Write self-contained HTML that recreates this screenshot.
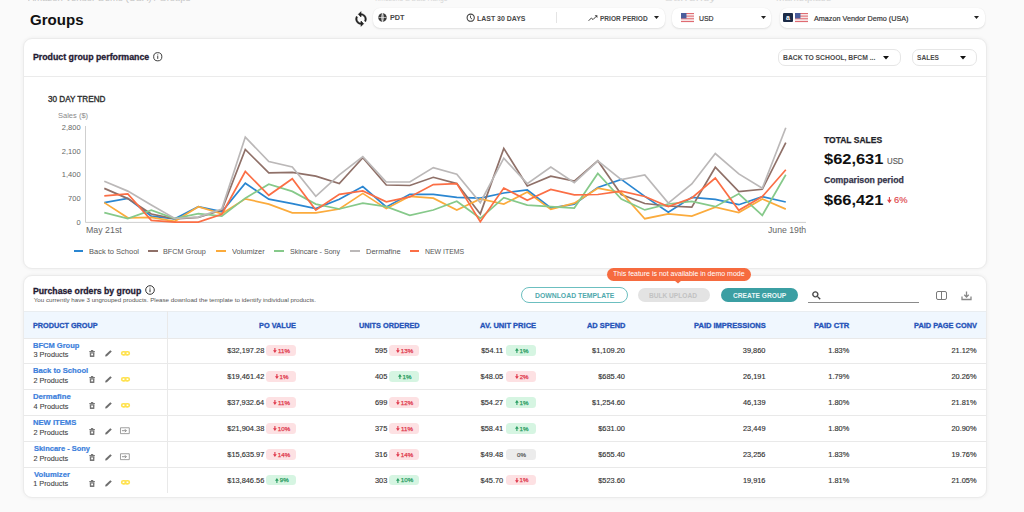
<!DOCTYPE html>
<html><head><meta charset="utf-8"><style>
html,body{margin:0;padding:0;}
body{width:1024px;height:512px;overflow:hidden;position:relative;background:#fafafa;font-family:"Liberation Sans", sans-serif;}
.t{position:absolute;white-space:nowrap;font-family:"Liberation Sans", sans-serif;}
svg{overflow:visible;}
</style></head><body>
<div class="t" style="left:30.38px;top:12.10px;font-size:15px;line-height:15px;font-weight:700;color:#111;transform:scaleX(1.0053);transform-origin:0 0;">Groups</div>
<div class="t" style="left:27.98px;top:-5.17px;font-size:8px;line-height:8px;font-weight:400;color:#c4c4c4;transform:scaleX(1.1817);transform-origin:0 0;">Amazon Vendor Demo (USA) / Groups</div>
<div class="t" style="left:373.55px;top:-4.53px;font-size:7px;line-height:7px;font-weight:400;color:#d6d6d6;transform:scaleX(0.9614);transform-origin:0 0;">Timezone &amp; Date Range</div>
<div class="t" style="left:664.36px;top:-4.53px;font-size:7px;line-height:7px;font-weight:400;color:#d6d6d6;transform:scaleX(1.8192);transform-origin:0 0;">Currency</div>
<div class="t" style="left:775.87px;top:-4.53px;font-size:7px;line-height:7px;font-weight:400;color:#d6d6d6;transform:scaleX(1.4498);transform-origin:0 0;">Marketplace</div>
<svg style="position:absolute;left:353px;top:11px" width="16" height="16" viewBox="0 0 24 24">
<path fill="#222" stroke="#222" stroke-width="0.9" d="M12 4V1L8 5l4 4V6c3.31 0 6 2.69 6 6 0 1.01-.25 1.97-.7 2.8l1.46 1.46C19.540 15.03 20 13.57 20 12c0-4.42-3.58-8-8-8zm0 14c-3.31 0-6-2.69-6-6 0-1.01.25-1.970.7-2.8L5.24 7.74C4.46 8.97 4 10.43 4 12c0 4.42 3.58 8 8 8v3l4-4-4-4v3z"/></svg>
<div style="position:absolute;left:373px;top:7.5px;width:292px;height:20.5px;background:#fff;border-radius:7px;box-shadow:0 1px 2px rgba(0,0,0,0.10),0 0 1px rgba(0,0,0,0.08);"></div>
<div style="position:absolute;left:672px;top:7.5px;width:99px;height:20.5px;background:#fff;border-radius:7px;box-shadow:0 1px 2px rgba(0,0,0,0.10),0 0 1px rgba(0,0,0,0.08);"></div>
<div style="position:absolute;left:779.5px;top:7.5px;width:205.5px;height:20.5px;background:#fff;border-radius:7px;box-shadow:0 1px 2px rgba(0,0,0,0.10),0 0 1px rgba(0,0,0,0.08);"></div>
<svg style="position:absolute;left:378px;top:12.8px" width="9" height="9" viewBox="0 0 20 20">
<circle cx="10" cy="10" r="9.5" fill="#3a3a3a"/><path fill="none" stroke="#fff" stroke-width="1.3" d="M1 10h18M10 1v18M10 1c-3 3-3 15 0 18M10 1c3 3 3 15 0 18"/></svg>
<div class="t" style="left:389.52px;top:14.40px;font-size:7.8px;line-height:7.8px;font-weight:700;color:#484848;transform:scaleX(0.9329);transform-origin:0 0;">PDT</div>
<svg style="position:absolute;left:465.8px;top:12.8px" width="9.4" height="9.4" viewBox="0 0 24 24">
<circle cx="12" cy="12" r="9.2" fill="none" stroke="#444" stroke-width="2.8"/><path fill="none" stroke="#444" stroke-width="2.4" d="M11.5 6.5V12.5L15.5 15.5"/></svg>
<div class="t" style="left:477.14px;top:14.70px;font-size:7.8px;line-height:7.8px;font-weight:700;color:#484848;transform:scaleX(0.8933);transform-origin:0 0;">LAST 30 DAYS</div>
<div style="position:absolute;left:556px;top:12px;width:0.8px;height:11px;background:#e4e4e4;"></div>
<svg style="position:absolute;left:587.5px;top:13.5px" width="10" height="8" viewBox="0 0 24 20">
<path fill="none" stroke="#333" stroke-width="2.4" d="M1 17 L8 10 L12 14 L20 6"/><path fill="#333" d="M16 3h7v7z"/></svg>
<div class="t" style="left:599.57px;top:14.70px;font-size:7.8px;line-height:7.8px;font-weight:700;color:#484848;transform:scaleX(0.8402);transform-origin:0 0;">PRIOR PERIOD</div>
<svg style="position:absolute;left:653.80px;top:16.20px" width="5" height="3" viewBox="0 0 5 3"><path fill="#222" d="M0 0H5L2.5 3z"/></svg>
<svg style="position:absolute;left:760.50px;top:16.20px" width="5" height="3" viewBox="0 0 5 3"><path fill="#222" d="M0 0H5L2.5 3z"/></svg>
<svg style="position:absolute;left:973.80px;top:16.20px" width="5" height="3" viewBox="0 0 5 3"><path fill="#222" d="M0 0H5L2.5 3z"/></svg>
<svg style="position:absolute;left:680.5px;top:13px" width="13" height="9.5" viewBox="0 0 13 9.5"><rect width="13" height="9.5" fill="#f6e4e5"/><rect y="0.000" width="13" height="0.746" fill="#d8434a"/><rect y="2.714" width="13" height="0.746" fill="#d8434a"/><rect y="5.429" width="13" height="0.746" fill="#d8434a"/><rect y="8.143" width="13" height="0.746" fill="#d8434a"/><rect width="5.46" height="5.43" fill="#4a5d9c"/></svg>
<div style="position:absolute;left:783.3px;top:13.3px;width:9.5px;height:9px;background:#1c2b47;border-radius:1px;"></div>
<div class="t" style="left:785.93px;top:14.07px;font-size:7px;line-height:7px;font-weight:700;color:#fff;">a</div>
<svg style="position:absolute;left:795.4px;top:13px" width="13" height="9.5" viewBox="0 0 13 9.5"><rect width="13" height="9.5" fill="#f6e4e5"/><rect y="0.000" width="13" height="0.746" fill="#d8434a"/><rect y="2.714" width="13" height="0.746" fill="#d8434a"/><rect y="5.429" width="13" height="0.746" fill="#d8434a"/><rect y="8.143" width="13" height="0.746" fill="#d8434a"/><rect width="5.46" height="5.43" fill="#4a5d9c"/></svg>
<div class="t" style="left:814.39px;top:14.73px;font-size:8.0px;line-height:8.0px;font-weight:400;color:#333;transform:scaleX(0.9041);transform-origin:0 0;-webkit-text-stroke:0.2px #333;">Amazon Vendor Demo (USA)</div>
<div class="t" style="left:699.17px;top:14.73px;font-size:8.0px;line-height:8.0px;font-weight:400;color:#333;transform:scaleX(0.8619);transform-origin:0 0;-webkit-text-stroke:0.2px #333;">USD</div>
<div style="position:absolute;left:23px;top:38px;width:963.5px;height:230.5px;background:#fff;border:1px solid #ebebeb;border-radius:9px;box-sizing:border-box;box-shadow:0 0 3px 1px rgba(0,0,0,0.035);"></div>
<div class="t" style="left:32.92px;top:52.75px;font-size:8.8px;line-height:8.8px;font-weight:700;color:#1f1a33;-webkit-text-stroke:0.3px #1f1a33;">Product group performance</div>
<svg style="position:absolute;left:153.25px;top:52.45px" width="9.5" height="9.5" viewBox="0 0 20 20"><circle cx="10" cy="10" r="8.6" fill="none" stroke="#333" stroke-width="2"/><rect x="9" y="8.5" width="2" height="6" fill="#333"/><rect x="9" y="5.2" width="2" height="2" fill="#333"/></svg>
<div style="position:absolute;left:24px;top:75.8px;width:961.5px;height:1.1px;background:#ebebeb;"></div>
<div style="position:absolute;left:777.5px;top:48.6px;width:123.5px;height:17.8px;background:#fff;border:1px solid #e6e6e6;border-radius:7px;box-sizing:border-box;"></div>
<div style="position:absolute;left:911.5px;top:48.6px;width:65.5px;height:17.8px;background:#fff;border:1px solid #e6e6e6;border-radius:7px;box-sizing:border-box;"></div>
<div class="t" style="left:782.85px;top:54.22px;font-size:7.3px;line-height:7.3px;font-weight:700;color:#4a4a4a;transform:scaleX(0.9276);transform-origin:0 0;">BACK TO SCHOOL, BFCM ...</div>
<svg style="position:absolute;left:883.00px;top:55.65px" width="6" height="3.5" viewBox="0 0 6 3.5"><path fill="#111" d="M0 0H6L3.0 3.5z"/></svg>
<div class="t" style="left:917.12px;top:54.22px;font-size:7.3px;line-height:7.3px;font-weight:700;color:#4a4a4a;transform:scaleX(0.9015);transform-origin:0 0;">SALES</div>
<svg style="position:absolute;left:959.50px;top:55.65px" width="6" height="3.5" viewBox="0 0 6 3.5"><path fill="#111" d="M0 0H6L3.0 3.5z"/></svg>
<div class="t" style="left:47.99px;top:94.87px;font-size:8.3px;line-height:8.3px;font-weight:400;color:#2e2e2e;transform:scaleX(0.9797);transform-origin:0 0;-webkit-text-stroke:0.35px #2e2e2e;">30 DAY TREND</div>
<div class="t" style="left:58.26px;top:112.21px;font-size:7.2px;line-height:7.2px;font-weight:400;color:#8a8a8a;transform:scaleX(1.0451);transform-origin:0 0;">Sales ($)</div>
<div class="t" style="left:61.82px;top:124.05px;font-size:7.5px;line-height:7.5px;font-weight:400;color:#666;">2,800</div>
<div class="t" style="left:61.82px;top:147.55px;font-size:7.5px;line-height:7.5px;font-weight:400;color:#666;">2,100</div>
<div class="t" style="left:61.82px;top:171.05px;font-size:7.5px;line-height:7.5px;font-weight:400;color:#666;">1,400</div>
<div class="t" style="left:68.08px;top:194.95px;font-size:7.5px;line-height:7.5px;font-weight:400;color:#666;">700</div>
<div class="t" style="left:76.41px;top:218.65px;font-size:7.5px;line-height:7.5px;font-weight:400;color:#666;">0</div>
<div class="t" style="left:86.18px;top:225.62px;font-size:8.6px;line-height:8.6px;font-weight:400;color:#666;transform:scaleX(1.0256);transform-origin:0 0;">May 21st</div>
<div class="t" style="left:767.87px;top:225.62px;font-size:8.6px;line-height:8.6px;font-weight:400;color:#666;transform:scaleX(1.0110);transform-origin:0 0;">June 19th</div>
<svg style="position:absolute;left:0;top:0" width="1024" height="512" viewBox="0 0 1024 512"><path d="M85.5 126V222.4H806" fill="none" stroke="#cfcfcf" stroke-width="1"/><polyline points="104.3,202.6 127.8,198.3 151.3,216.2 174.8,218.8 198.3,206.7 221.8,211.7 245.3,183.2 268.8,199.2 292.3,203.6 315.8,208.6 339.3,199.2 362.8,186.5 386.3,207.0 409.8,194.3 433.3,194.3 456.8,197.3 480.3,198.2 503.8,193.0 527.3,190.0 550.8,208.0 574.3,204.1 597.8,187.4 621.3,179.4 644.8,196.4 668.3,212.2 691.8,197.3 715.3,199.4 738.8,204.7 762.3,196.6 785.8,202.0" fill="none" stroke="#2a86d1" stroke-width="1.7" stroke-linejoin="miter"/><polyline points="104.3,188.4 127.8,198.6 151.3,214.0 174.8,218.8 198.3,217.3 221.8,210.0 245.3,149.4 268.8,172.9 292.3,172.3 315.8,176.2 339.3,183.6 362.8,157.8 386.3,185.0 409.8,185.5 433.3,177.3 456.8,183.6 480.3,213.9 503.8,148.4 527.3,186.0 550.8,176.2 574.3,181.2 597.8,160.8 621.3,194.5 644.8,203.5 668.3,206.0 691.8,207.2 715.3,167.2 738.8,191.6 762.3,189.3 785.8,142.7" fill="none" stroke="#8f7068" stroke-width="1.7" stroke-linejoin="miter"/><polyline points="104.3,202.6 127.8,217.8 151.3,217.4 174.8,221.3 198.3,206.7 221.8,213.8 245.3,198.8 268.8,204.1 292.3,212.9 315.8,212.9 339.3,209.0 362.8,193.4 386.3,208.6 409.8,196.3 433.3,198.2 456.8,210.0 480.3,199.0 503.8,204.1 527.3,192.0 550.8,209.4 574.3,203.1 597.8,188.2 621.3,192.6 644.8,218.7 668.3,213.9 691.8,216.1 715.3,207.2 738.8,212.5 762.3,198.9 785.8,209.1" fill="none" stroke="#fbab3c" stroke-width="1.7" stroke-linejoin="miter"/><polyline points="104.3,212.6 127.8,218.6 151.3,210.2 174.8,218.5 198.3,213.6 221.8,216.2 245.3,198.2 268.8,184.2 292.3,191.4 315.8,204.1 339.3,209.0 362.8,203.1 386.3,206.6 409.8,215.4 433.3,210.0 456.8,201.2 480.3,218.3 503.8,197.7 527.3,205.1 550.8,206.6 574.3,208.0 597.8,173.4 621.3,199.0 644.8,209.9 668.3,204.0 691.8,201.4 715.3,206.7 738.8,193.8 762.3,215.3 785.8,174.7" fill="none" stroke="#86c98a" stroke-width="1.7" stroke-linejoin="miter"/><polyline points="104.3,181.2 127.8,191.1 151.3,204.9 174.8,218.5 198.3,217.1 221.8,209.0 245.3,137.1 268.8,161.5 292.3,167.0 315.8,196.3 339.3,174.8 362.8,156.6 386.3,182.0 409.8,182.0 433.3,167.6 456.8,174.2 480.3,202.7 503.8,158.2 527.3,183.6 550.8,167.0 574.3,182.6 597.8,160.8 621.3,179.6 644.8,174.9 668.3,203.1 691.8,184.0 715.3,153.5 738.8,173.9 762.3,188.2 785.8,127.8" fill="none" stroke="#bbb8b8" stroke-width="1.7" stroke-linejoin="miter"/><polyline points="104.3,195.9 127.8,194.0 151.3,220.4 174.8,222.1 198.3,222.1 221.8,214.2 245.3,171.5 268.8,195.3 292.3,178.7 315.8,210.0 339.3,194.3 362.8,191.0 386.3,201.8 409.8,196.9 433.3,184.6 456.8,183.6 480.3,221.7 503.8,188.1 527.3,200.2 550.8,189.5 574.3,194.9 597.8,194.5 621.3,191.2 644.8,196.5 668.3,206.5 691.8,198.0 715.3,178.1 738.8,210.3 762.3,196.6 785.8,169.8" fill="none" stroke="#fb6e45" stroke-width="1.7" stroke-linejoin="miter"/></svg>
<div style="position:absolute;left:73.8px;top:250.4px;width:9.6px;height:1.9px;background:#2a86d1;"></div>
<div class="t" style="left:88.79px;top:247.57px;font-size:7.6px;line-height:7.6px;font-weight:400;color:#555;transform:scaleX(0.9865);transform-origin:0 0;">Back to School</div>
<div style="position:absolute;left:148px;top:250.4px;width:9.6px;height:1.9px;background:#8f7068;"></div>
<div class="t" style="left:163.10px;top:247.57px;font-size:7.6px;line-height:7.6px;font-weight:400;color:#555;transform:scaleX(0.9560);transform-origin:0 0;">BFCM Group</div>
<div style="position:absolute;left:216.4px;top:250.4px;width:9.6px;height:1.9px;background:#fbab3c;"></div>
<div class="t" style="left:231.57px;top:247.57px;font-size:7.6px;line-height:7.6px;font-weight:400;color:#555;transform:scaleX(0.9813);transform-origin:0 0;">Volumizer</div>
<div style="position:absolute;left:274.2px;top:250.4px;width:9.6px;height:1.9px;background:#86c98a;"></div>
<div class="t" style="left:290.08px;top:247.57px;font-size:7.6px;line-height:7.6px;font-weight:400;color:#555;transform:scaleX(0.9345);transform-origin:0 0;">Skincare - Sony</div>
<div style="position:absolute;left:350.4px;top:250.4px;width:9.6px;height:1.9px;background:#bbb8b8;"></div>
<div class="t" style="left:365.98px;top:247.57px;font-size:7.6px;line-height:7.6px;font-weight:400;color:#555;transform:scaleX(0.9912);transform-origin:0 0;">Dermafine</div>
<div style="position:absolute;left:409.6px;top:250.4px;width:9.6px;height:1.9px;background:#fb6e45;"></div>
<div class="t" style="left:425.23px;top:247.57px;font-size:7.6px;line-height:7.6px;font-weight:400;color:#555;transform:scaleX(0.9120);transform-origin:0 0;">NEW ITEMS</div>
<div class="t" style="left:824.01px;top:135.87px;font-size:8.3px;line-height:8.3px;font-weight:700;color:#1f1f2a;transform:scaleX(1.0247);transform-origin:0 0;-webkit-text-stroke:0.25px #1f1f2a;">TOTAL SALES</div>
<div class="t" style="left:823.79px;top:151.00px;font-size:15.0px;line-height:15.0px;font-weight:700;color:#111;transform:scaleX(1.0946);transform-origin:0 0;">$62,631</div>
<div class="t" style="left:887.00px;top:157.09px;font-size:8.4px;line-height:8.4px;font-weight:400;color:#5a5a5a;transform:scaleX(0.9346);transform-origin:0 0;-webkit-text-stroke:0.15px #5a5a5a;">USD</div>
<div class="t" style="left:823.64px;top:175.92px;font-size:8.6px;line-height:8.6px;font-weight:700;color:#34344a;transform:scaleX(1.0125);transform-origin:0 0;-webkit-text-stroke:0.25px #34344a;">Comparison period</div>
<div class="t" style="left:823.79px;top:191.90px;font-size:15.0px;line-height:15.0px;font-weight:700;color:#111;transform:scaleX(1.0946);transform-origin:0 0;">$66,421</div>
<svg style="position:absolute;left:886.80px;top:197.20px" width="4.8" height="6.2" viewBox="0 0 4.8 6.2"><path fill="#e0474c" d="M1.85 0H2.95V2.79H4.80L2.40 6.20L0 2.79H1.85z"/></svg>
<div class="t" style="left:893.53px;top:196.12px;font-size:8.6px;line-height:8.6px;font-weight:400;color:#e0474c;transform:scaleX(1.0858);transform-origin:0 0;-webkit-text-stroke:0.15px #e0474c;">6%</div>
<div style="position:absolute;left:23px;top:275.0px;width:963.5px;height:222.5px;background:#fff;border:1px solid #ebebeb;border-radius:9px;box-sizing:border-box;box-shadow:0 0 3px 1px rgba(0,0,0,0.035);"></div>
<div class="t" style="left:33.33px;top:286.92px;font-size:8.6px;line-height:8.6px;font-weight:700;color:#1f1a33;transform:scaleX(1.0119);transform-origin:0 0;-webkit-text-stroke:0.3px #1f1a33;">Purchase orders by group</div>
<svg style="position:absolute;left:144.60px;top:285.30px" width="10" height="10" viewBox="0 0 20 20"><circle cx="10" cy="10" r="8.6" fill="none" stroke="#333" stroke-width="2"/><rect x="9" y="8.5" width="2" height="6" fill="#333"/><rect x="9" y="5.2" width="2" height="2" fill="#333"/></svg>
<div class="t" style="left:33.76px;top:297.15px;font-size:6.2px;line-height:6.2px;font-weight:400;color:#555;">You currently have 3 ungrouped products. Please download the template to identify individual products.</div>
<div style="position:absolute;left:521px;top:287.2px;width:107px;height:15.8px;border:1.3px solid #6cbfc0;border-radius:9px;box-sizing:border-box;background:#fff;"></div>
<div class="t" style="left:534.85px;top:292.84px;font-size:6.8px;line-height:6.8px;font-weight:700;color:#4fa9ad;transform:scaleX(1.0076);transform-origin:0 0;">DOWNLOAD TEMPLATE</div>
<div style="position:absolute;left:638.3px;top:287.8px;width:72px;height:14px;background:#e3e3e3;border-radius:8px;"></div>
<div class="t" style="left:649.27px;top:292.74px;font-size:6.8px;line-height:6.8px;font-weight:700;color:#c2c2c2;transform:scaleX(0.9681);transform-origin:0 0;">BULK UPLOAD</div>
<div style="position:absolute;left:720.6px;top:288.3px;width:77.2px;height:13.6px;background:#3b9fa3;border-radius:8px;"></div>
<div class="t" style="left:732.83px;top:292.74px;font-size:6.8px;line-height:6.8px;font-weight:700;color:#e9f6f6;transform:scaleX(0.9801);transform-origin:0 0;">CREATE GROUP</div>
<div style="position:absolute;left:607px;top:267.5px;width:143.8px;height:13px;background:#f66b3f;border-radius:7px;"></div>
<svg style="position:absolute;left:674px;top:280px" width="8" height="4" viewBox="0 0 8 4"><path d="M0 0H8L4 3.5z" fill="#f66b3f"/></svg>
<div class="t" style="left:613.15px;top:270.84px;font-size:6.8px;line-height:6.8px;font-weight:400;color:#fff;transform:scaleX(1.0306);transform-origin:0 0;">This feature is not available in demo mode</div>
<svg style="position:absolute;left:811.3px;top:289.8px" width="11" height="11" viewBox="0 0 24 24">
<path fill="#333" stroke="#333" stroke-width="0.8" d="M15.5 14h-.79l-.28-.27C15.41 12.59 16 11.11 16 9.5 16 5.91 13.09 3 9.5 3S3 5.91 3 9.5 5.91 16 9.5 16c1.61 0 3.09-.59 4.23-1.57l.27.28v.79l5 4.99L20.49 19l-4.99-5zm-6 0C7.01 14 5 11.99 5 9.5S7.01 5 9.5 5 14 7.01 14 9.5 11.99 14 9.5 14z"/></svg>
<div style="position:absolute;left:808px;top:301.8px;width:111px;height:1px;background:#8a8a8a;"></div>
<div style="position:absolute;left:936.3px;top:290.8px;width:10.4px;height:9.5px;border:1.7px solid #7a7a7a;border-radius:2px;box-sizing:border-box;"></div>
<div style="position:absolute;left:940.8px;top:290.8px;width:1.5px;height:9.5px;background:#7a7a7a;"></div>
<svg style="position:absolute;left:961px;top:290.8px" width="11" height="9.5" viewBox="0 0 22 19">
<path fill="none" stroke="#888" stroke-width="2.6" d="M2 11v6h18v-6M11 1v11M6.5 7.5L11 12l4.5-4.5"/></svg>
<div style="position:absolute;left:24px;top:311px;width:961.5px;height:26.5px;background:#f0f7fe;"></div>
<div style="position:absolute;left:24px;top:310.6px;width:961.5px;height:0.8px;background:#e9edf0;"></div>
<div style="position:absolute;left:24px;top:337.5px;width:961.5px;height:1px;background:#e9e9e9;"></div>
<div style="position:absolute;left:24px;top:363.3px;width:961.5px;height:1px;background:#e9e9e9;"></div>
<div style="position:absolute;left:24px;top:389.3px;width:961.5px;height:1px;background:#e9e9e9;"></div>
<div style="position:absolute;left:24px;top:415.3px;width:961.5px;height:1px;background:#e9e9e9;"></div>
<div style="position:absolute;left:24px;top:441.3px;width:961.5px;height:1px;background:#e9e9e9;"></div>
<div style="position:absolute;left:24px;top:467.0px;width:961.5px;height:1px;background:#e9e9e9;"></div>
<div style="position:absolute;left:166.6px;top:311px;width:0.9px;height:182px;background:#e9e9e9;"></div>
<div class="t" style="left:33.27px;top:321.91px;font-size:7.2px;line-height:7.2px;font-weight:700;color:#2553b9;transform:scaleX(1.0114);transform-origin:0 0;-webkit-text-stroke:0.3px #2553b9;">PRODUCT GROUP</div>
<div class="t" style="left:259.02px;top:321.91px;font-size:7.2px;line-height:7.2px;font-weight:700;color:#2553b9;transform:scaleX(1.0206);transform-origin:0 0;-webkit-text-stroke:0.3px #2553b9;">PO VALUE</div>
<div class="t" style="left:358.81px;top:321.91px;font-size:7.2px;line-height:7.2px;font-weight:700;color:#2553b9;transform:scaleX(1.0191);transform-origin:0 0;-webkit-text-stroke:0.3px #2553b9;">UNITS ORDERED</div>
<div class="t" style="left:479.82px;top:321.91px;font-size:7.2px;line-height:7.2px;font-weight:700;color:#2553b9;transform:scaleX(1.0488);transform-origin:0 0;-webkit-text-stroke:0.3px #2553b9;">AV. UNIT PRICE</div>
<div class="t" style="left:586.82px;top:321.91px;font-size:7.2px;line-height:7.2px;font-weight:700;color:#2553b9;transform:scaleX(1.0345);transform-origin:0 0;-webkit-text-stroke:0.3px #2553b9;">AD SPEND</div>
<div class="t" style="left:694.00px;top:321.91px;font-size:7.2px;line-height:7.2px;font-weight:700;color:#2553b9;transform:scaleX(1.0453);transform-origin:0 0;-webkit-text-stroke:0.3px #2553b9;">PAID IMPRESSIONS</div>
<div class="t" style="left:814.00px;top:321.91px;font-size:7.2px;line-height:7.2px;font-weight:700;color:#2553b9;transform:scaleX(1.0580);transform-origin:0 0;-webkit-text-stroke:0.3px #2553b9;">PAID CTR</div>
<div class="t" style="left:913.76px;top:321.91px;font-size:7.2px;line-height:7.2px;font-weight:700;color:#2553b9;transform:scaleX(1.0275);transform-origin:0 0;-webkit-text-stroke:0.3px #2553b9;">PAID PAGE CONV</div>
<div class="t" style="left:33.25px;top:341.54px;font-size:7.4px;line-height:7.4px;font-weight:700;color:#3d7fdc;transform:scaleX(1.0181);transform-origin:0 0;-webkit-text-stroke:0.2px #3d7fdc;">BFCM Group</div>
<div class="t" style="left:33.47px;top:350.72px;font-size:7.3px;line-height:7.3px;font-weight:400;color:#444;-webkit-text-stroke:0.1px #444;">3 Products</div>
<svg style="position:absolute;left:88.8px;top:350.10px" width="6.2" height="7.2" viewBox="0 0 12 14">
<path fill="#777" d="M0.6 1.8h10.8v2.2H0.6zM3.8 0.2h4.4v1.8H3.8zM1.3 4.6h9.4l-.4 9.2H1.7z"/><rect x="4.2" y="6.9" width="3.6" height="3.6" fill="#fff"/></svg>
<svg style="position:absolute;left:105px;top:350.10px" width="7.2" height="6.6" viewBox="0 0 14 13">
<path fill="#6e6e6e" d="M0.3 12.7 L0.9 9.6 L10.4 0.3 L13.3 3.1 L3.6 12.3z"/></svg>
<svg style="position:absolute;left:120.8px;top:350.90px" width="9" height="4.6" viewBox="0 0 18 9">
<rect x="1.3" y="1.3" width="8.4" height="6.4" rx="3.2" fill="none" stroke="#ffe24f" stroke-width="3.2"/><rect x="8.3" y="1.3" width="8.4" height="6.4" rx="3.2" fill="none" stroke="#ffe24f" stroke-width="3.2"/></svg>
<div style="position:absolute;left:266.0px;top:345.0px;width:29.5px;height:10.8px;background:#fde1e3;border-radius:3.5px;"></div>
<svg style="position:absolute;left:273.17px;top:348.20px" width="3.8" height="5.0" viewBox="0 0 3.8 5.0"><path fill="#e03a4e" d="M1.35 0H2.45V2.25H3.80L1.90 5.00L0 2.25H1.35z"/></svg>
<div class="t" style="left:278.10px;top:347.75px;font-size:6.2px;line-height:6.2px;font-weight:400;color:#e03a4e;-webkit-text-stroke:0.25px #e03a4e;">11%</div>
<div class="t" style="left:227.28px;top:347.04px;font-size:7.4px;line-height:7.4px;font-weight:400;color:#333;-webkit-text-stroke:0.15px #333;">$32,197.28</div>
<div style="position:absolute;left:389.0px;top:345.0px;width:29.5px;height:10.8px;background:#fde1e3;border-radius:3.5px;"></div>
<svg style="position:absolute;left:395.94px;top:348.20px" width="3.8" height="5.0" viewBox="0 0 3.8 5.0"><path fill="#e03a4e" d="M1.35 0H2.45V2.25H3.80L1.90 5.00L0 2.25H1.35z"/></svg>
<div class="t" style="left:400.87px;top:347.75px;font-size:6.2px;line-height:6.2px;font-weight:400;color:#e03a4e;-webkit-text-stroke:0.25px #e03a4e;">13%</div>
<div class="t" style="left:374.96px;top:347.04px;font-size:7.4px;line-height:7.4px;font-weight:400;color:#333;-webkit-text-stroke:0.15px #333;">595</div>
<div style="position:absolute;left:506.0px;top:345.0px;width:29.5px;height:10.8px;background:#d6f5e2;border-radius:3.5px;"></div>
<svg style="position:absolute;left:514.66px;top:348.20px" width="3.8" height="5.0" viewBox="0 0 3.8 5.0"><path fill="#2a9d63" d="M1.35 5.00H2.45V2.75H3.80L1.90 0L0 2.75H1.35z"/></svg>
<div class="t" style="left:519.59px;top:347.75px;font-size:6.2px;line-height:6.2px;font-weight:400;color:#2a9d63;-webkit-text-stroke:0.25px #2a9d63;">1%</div>
<div class="t" style="left:481.17px;top:347.04px;font-size:7.4px;line-height:7.4px;font-weight:400;color:#333;-webkit-text-stroke:0.15px #333;">$54.11</div>
<div class="t" style="left:592.06px;top:347.04px;font-size:7.4px;line-height:7.4px;font-weight:400;color:#333;-webkit-text-stroke:0.15px #333;">$1,109.20</div>
<div class="t" style="left:742.85px;top:347.04px;font-size:7.4px;line-height:7.4px;font-weight:400;color:#333;-webkit-text-stroke:0.15px #333;">39,860</div>
<div class="t" style="left:828.28px;top:347.04px;font-size:7.4px;line-height:7.4px;font-weight:400;color:#333;-webkit-text-stroke:0.15px #333;">1.83%</div>
<div class="t" style="left:951.47px;top:347.04px;font-size:7.4px;line-height:7.4px;font-weight:400;color:#333;-webkit-text-stroke:0.15px #333;">21.12%</div>
<div class="t" style="left:33.24px;top:367.34px;font-size:7.4px;line-height:7.4px;font-weight:700;color:#3d7fdc;transform:scaleX(1.0343);transform-origin:0 0;-webkit-text-stroke:0.2px #3d7fdc;">Back to School</div>
<div class="t" style="left:33.38px;top:376.52px;font-size:7.3px;line-height:7.3px;font-weight:400;color:#444;-webkit-text-stroke:0.1px #444;">2 Products</div>
<svg style="position:absolute;left:88.8px;top:375.90px" width="6.2" height="7.2" viewBox="0 0 12 14">
<path fill="#777" d="M0.6 1.8h10.8v2.2H0.6zM3.8 0.2h4.4v1.8H3.8zM1.3 4.6h9.4l-.4 9.2H1.7z"/><rect x="4.2" y="6.9" width="3.6" height="3.6" fill="#fff"/></svg>
<svg style="position:absolute;left:105px;top:375.90px" width="7.2" height="6.6" viewBox="0 0 14 13">
<path fill="#6e6e6e" d="M0.3 12.7 L0.9 9.6 L10.4 0.3 L13.3 3.1 L3.6 12.3z"/></svg>
<svg style="position:absolute;left:120.8px;top:376.70px" width="9" height="4.6" viewBox="0 0 18 9">
<rect x="1.3" y="1.3" width="8.4" height="6.4" rx="3.2" fill="none" stroke="#ffe24f" stroke-width="3.2"/><rect x="8.3" y="1.3" width="8.4" height="6.4" rx="3.2" fill="none" stroke="#ffe24f" stroke-width="3.2"/></svg>
<div style="position:absolute;left:266.0px;top:370.8px;width:29.5px;height:10.8px;background:#fde1e3;border-radius:3.5px;"></div>
<svg style="position:absolute;left:274.66px;top:374.00px" width="3.8" height="5.0" viewBox="0 0 3.8 5.0"><path fill="#e03a4e" d="M1.35 0H2.45V2.25H3.80L1.90 5.00L0 2.25H1.35z"/></svg>
<div class="t" style="left:279.59px;top:373.55px;font-size:6.2px;line-height:6.2px;font-weight:400;color:#e03a4e;-webkit-text-stroke:0.25px #e03a4e;">1%</div>
<div class="t" style="left:227.33px;top:372.84px;font-size:7.4px;line-height:7.4px;font-weight:400;color:#333;-webkit-text-stroke:0.15px #333;">$19,461.42</div>
<div style="position:absolute;left:389.0px;top:370.8px;width:29.5px;height:10.8px;background:#d6f5e2;border-radius:3.5px;"></div>
<svg style="position:absolute;left:397.66px;top:374.00px" width="3.8" height="5.0" viewBox="0 0 3.8 5.0"><path fill="#2a9d63" d="M1.35 5.00H2.45V2.75H3.80L1.90 0L0 2.75H1.35z"/></svg>
<div class="t" style="left:402.59px;top:373.55px;font-size:6.2px;line-height:6.2px;font-weight:400;color:#2a9d63;-webkit-text-stroke:0.25px #2a9d63;">1%</div>
<div class="t" style="left:374.96px;top:372.84px;font-size:7.4px;line-height:7.4px;font-weight:400;color:#333;-webkit-text-stroke:0.15px #333;">405</div>
<div style="position:absolute;left:506.0px;top:370.8px;width:29.5px;height:10.8px;background:#fde1e3;border-radius:3.5px;"></div>
<svg style="position:absolute;left:514.58px;top:374.00px" width="3.8" height="5.0" viewBox="0 0 3.8 5.0"><path fill="#e03a4e" d="M1.35 0H2.45V2.25H3.80L1.90 5.00L0 2.25H1.35z"/></svg>
<div class="t" style="left:519.67px;top:373.55px;font-size:6.2px;line-height:6.2px;font-weight:400;color:#e03a4e;-webkit-text-stroke:0.25px #e03a4e;">2%</div>
<div class="t" style="left:480.57px;top:372.84px;font-size:7.4px;line-height:7.4px;font-weight:400;color:#333;-webkit-text-stroke:0.15px #333;">$48.05</div>
<div class="t" style="left:598.23px;top:372.84px;font-size:7.4px;line-height:7.4px;font-weight:400;color:#333;-webkit-text-stroke:0.15px #333;">$685.40</div>
<div class="t" style="left:742.93px;top:372.84px;font-size:7.4px;line-height:7.4px;font-weight:400;color:#333;-webkit-text-stroke:0.15px #333;">26,191</div>
<div class="t" style="left:828.28px;top:372.84px;font-size:7.4px;line-height:7.4px;font-weight:400;color:#333;-webkit-text-stroke:0.15px #333;">1.79%</div>
<div class="t" style="left:951.47px;top:372.84px;font-size:7.4px;line-height:7.4px;font-weight:400;color:#333;-webkit-text-stroke:0.15px #333;">20.26%</div>
<div class="t" style="left:33.24px;top:393.34px;font-size:7.4px;line-height:7.4px;font-weight:700;color:#3d7fdc;transform:scaleX(1.0438);transform-origin:0 0;-webkit-text-stroke:0.2px #3d7fdc;">Dermafine</div>
<div class="t" style="left:33.59px;top:402.52px;font-size:7.3px;line-height:7.3px;font-weight:400;color:#444;-webkit-text-stroke:0.1px #444;">4 Products</div>
<svg style="position:absolute;left:88.8px;top:401.90px" width="6.2" height="7.2" viewBox="0 0 12 14">
<path fill="#777" d="M0.6 1.8h10.8v2.2H0.6zM3.8 0.2h4.4v1.8H3.8zM1.3 4.6h9.4l-.4 9.2H1.7z"/><rect x="4.2" y="6.9" width="3.6" height="3.6" fill="#fff"/></svg>
<svg style="position:absolute;left:105px;top:401.90px" width="7.2" height="6.6" viewBox="0 0 14 13">
<path fill="#6e6e6e" d="M0.3 12.7 L0.9 9.6 L10.4 0.3 L13.3 3.1 L3.6 12.3z"/></svg>
<svg style="position:absolute;left:120.8px;top:402.70px" width="9" height="4.6" viewBox="0 0 18 9">
<rect x="1.3" y="1.3" width="8.4" height="6.4" rx="3.2" fill="none" stroke="#ffe24f" stroke-width="3.2"/><rect x="8.3" y="1.3" width="8.4" height="6.4" rx="3.2" fill="none" stroke="#ffe24f" stroke-width="3.2"/></svg>
<div style="position:absolute;left:266.0px;top:396.8px;width:29.5px;height:10.8px;background:#fde1e3;border-radius:3.5px;"></div>
<svg style="position:absolute;left:273.17px;top:400.00px" width="3.8" height="5.0" viewBox="0 0 3.8 5.0"><path fill="#e03a4e" d="M1.35 0H2.45V2.25H3.80L1.90 5.00L0 2.25H1.35z"/></svg>
<div class="t" style="left:278.10px;top:399.55px;font-size:6.2px;line-height:6.2px;font-weight:400;color:#e03a4e;-webkit-text-stroke:0.25px #e03a4e;">11%</div>
<div class="t" style="left:227.18px;top:398.84px;font-size:7.4px;line-height:7.4px;font-weight:400;color:#333;-webkit-text-stroke:0.15px #333;">$37,932.64</div>
<div style="position:absolute;left:389.0px;top:396.8px;width:29.5px;height:10.8px;background:#fde1e3;border-radius:3.5px;"></div>
<svg style="position:absolute;left:395.94px;top:400.00px" width="3.8" height="5.0" viewBox="0 0 3.8 5.0"><path fill="#e03a4e" d="M1.35 0H2.45V2.25H3.80L1.90 5.00L0 2.25H1.35z"/></svg>
<div class="t" style="left:400.87px;top:399.55px;font-size:6.2px;line-height:6.2px;font-weight:400;color:#e03a4e;-webkit-text-stroke:0.25px #e03a4e;">12%</div>
<div class="t" style="left:375.00px;top:398.84px;font-size:7.4px;line-height:7.4px;font-weight:400;color:#333;-webkit-text-stroke:0.15px #333;">699</div>
<div style="position:absolute;left:506.0px;top:396.8px;width:29.5px;height:10.8px;background:#d6f5e2;border-radius:3.5px;"></div>
<svg style="position:absolute;left:514.66px;top:400.00px" width="3.8" height="5.0" viewBox="0 0 3.8 5.0"><path fill="#2a9d63" d="M1.35 5.00H2.45V2.75H3.80L1.90 0L0 2.75H1.35z"/></svg>
<div class="t" style="left:519.59px;top:399.55px;font-size:6.2px;line-height:6.2px;font-weight:400;color:#2a9d63;-webkit-text-stroke:0.25px #2a9d63;">1%</div>
<div class="t" style="left:480.64px;top:398.84px;font-size:7.4px;line-height:7.4px;font-weight:400;color:#333;-webkit-text-stroke:0.15px #333;">$54.27</div>
<div class="t" style="left:592.06px;top:398.84px;font-size:7.4px;line-height:7.4px;font-weight:400;color:#333;-webkit-text-stroke:0.15px #333;">$1,254.60</div>
<div class="t" style="left:742.92px;top:398.84px;font-size:7.4px;line-height:7.4px;font-weight:400;color:#333;-webkit-text-stroke:0.15px #333;">46,139</div>
<div class="t" style="left:828.28px;top:398.84px;font-size:7.4px;line-height:7.4px;font-weight:400;color:#333;-webkit-text-stroke:0.15px #333;">1.80%</div>
<div class="t" style="left:951.47px;top:398.84px;font-size:7.4px;line-height:7.4px;font-weight:400;color:#333;-webkit-text-stroke:0.15px #333;">21.81%</div>
<div class="t" style="left:33.25px;top:419.34px;font-size:7.4px;line-height:7.4px;font-weight:700;color:#3d7fdc;transform:scaleX(1.0326);transform-origin:0 0;-webkit-text-stroke:0.2px #3d7fdc;">NEW ITEMS</div>
<div class="t" style="left:33.38px;top:428.52px;font-size:7.3px;line-height:7.3px;font-weight:400;color:#444;-webkit-text-stroke:0.1px #444;">2 Products</div>
<svg style="position:absolute;left:88.8px;top:427.90px" width="6.2" height="7.2" viewBox="0 0 12 14">
<path fill="#777" d="M0.6 1.8h10.8v2.2H0.6zM3.8 0.2h4.4v1.8H3.8zM1.3 4.6h9.4l-.4 9.2H1.7z"/><rect x="4.2" y="6.9" width="3.6" height="3.6" fill="#fff"/></svg>
<svg style="position:absolute;left:105px;top:427.90px" width="7.2" height="6.6" viewBox="0 0 14 13">
<path fill="#6e6e6e" d="M0.3 12.7 L0.9 9.6 L10.4 0.3 L13.3 3.1 L3.6 12.3z"/></svg>
<svg style="position:absolute;left:120.3px;top:426.90px" width="9.8" height="7.4" viewBox="0 0 20 15">
<path fill="none" stroke="#858585" stroke-width="1.6" d="M1 1.5h18v12H1z"/><path fill="none" stroke="#858585" stroke-width="1.8" d="M4 7.5h9M10 4.5l3 3-3 3"/></svg>
<div style="position:absolute;left:266.0px;top:422.8px;width:29.5px;height:10.8px;background:#fde1e3;border-radius:3.5px;"></div>
<svg style="position:absolute;left:272.94px;top:426.00px" width="3.8" height="5.0" viewBox="0 0 3.8 5.0"><path fill="#e03a4e" d="M1.35 0H2.45V2.25H3.80L1.90 5.00L0 2.25H1.35z"/></svg>
<div class="t" style="left:277.87px;top:425.55px;font-size:6.2px;line-height:6.2px;font-weight:400;color:#e03a4e;-webkit-text-stroke:0.25px #e03a4e;">10%</div>
<div class="t" style="left:227.28px;top:424.84px;font-size:7.4px;line-height:7.4px;font-weight:400;color:#333;-webkit-text-stroke:0.15px #333;">$21,904.38</div>
<div style="position:absolute;left:389.0px;top:422.8px;width:29.5px;height:10.8px;background:#fde1e3;border-radius:3.5px;"></div>
<svg style="position:absolute;left:396.17px;top:426.00px" width="3.8" height="5.0" viewBox="0 0 3.8 5.0"><path fill="#e03a4e" d="M1.35 0H2.45V2.25H3.80L1.90 5.00L0 2.25H1.35z"/></svg>
<div class="t" style="left:401.10px;top:425.55px;font-size:6.2px;line-height:6.2px;font-weight:400;color:#e03a4e;-webkit-text-stroke:0.25px #e03a4e;">11%</div>
<div class="t" style="left:374.96px;top:424.84px;font-size:7.4px;line-height:7.4px;font-weight:400;color:#333;-webkit-text-stroke:0.15px #333;">375</div>
<div style="position:absolute;left:506.0px;top:422.8px;width:29.5px;height:10.8px;background:#d6f5e2;border-radius:3.5px;"></div>
<svg style="position:absolute;left:514.66px;top:426.00px" width="3.8" height="5.0" viewBox="0 0 3.8 5.0"><path fill="#2a9d63" d="M1.35 5.00H2.45V2.75H3.80L1.90 0L0 2.75H1.35z"/></svg>
<div class="t" style="left:519.59px;top:425.55px;font-size:6.2px;line-height:6.2px;font-weight:400;color:#2a9d63;-webkit-text-stroke:0.25px #2a9d63;">1%</div>
<div class="t" style="left:480.63px;top:424.84px;font-size:7.4px;line-height:7.4px;font-weight:400;color:#333;-webkit-text-stroke:0.15px #333;">$58.41</div>
<div class="t" style="left:598.23px;top:424.84px;font-size:7.4px;line-height:7.4px;font-weight:400;color:#333;-webkit-text-stroke:0.15px #333;">$631.00</div>
<div class="t" style="left:742.92px;top:424.84px;font-size:7.4px;line-height:7.4px;font-weight:400;color:#333;-webkit-text-stroke:0.15px #333;">23,449</div>
<div class="t" style="left:828.28px;top:424.84px;font-size:7.4px;line-height:7.4px;font-weight:400;color:#333;-webkit-text-stroke:0.15px #333;">1.80%</div>
<div class="t" style="left:951.47px;top:424.84px;font-size:7.4px;line-height:7.4px;font-weight:400;color:#333;-webkit-text-stroke:0.15px #333;">20.90%</div>
<div class="t" style="left:33.54px;top:445.34px;font-size:7.4px;line-height:7.4px;font-weight:700;color:#3d7fdc;transform:scaleX(1.0085);transform-origin:0 0;-webkit-text-stroke:0.2px #3d7fdc;">Skincare - Sony</div>
<div class="t" style="left:33.38px;top:454.52px;font-size:7.3px;line-height:7.3px;font-weight:400;color:#444;-webkit-text-stroke:0.1px #444;">2 Products</div>
<svg style="position:absolute;left:88.8px;top:453.90px" width="6.2" height="7.2" viewBox="0 0 12 14">
<path fill="#777" d="M0.6 1.8h10.8v2.2H0.6zM3.8 0.2h4.4v1.8H3.8zM1.3 4.6h9.4l-.4 9.2H1.7z"/><rect x="4.2" y="6.9" width="3.6" height="3.6" fill="#fff"/></svg>
<svg style="position:absolute;left:105px;top:453.90px" width="7.2" height="6.6" viewBox="0 0 14 13">
<path fill="#6e6e6e" d="M0.3 12.7 L0.9 9.6 L10.4 0.3 L13.3 3.1 L3.6 12.3z"/></svg>
<svg style="position:absolute;left:120.3px;top:452.90px" width="9.8" height="7.4" viewBox="0 0 20 15">
<path fill="none" stroke="#858585" stroke-width="1.6" d="M1 1.5h18v12H1z"/><path fill="none" stroke="#858585" stroke-width="1.8" d="M4 7.5h9M10 4.5l3 3-3 3"/></svg>
<div style="position:absolute;left:266.0px;top:448.8px;width:29.5px;height:10.8px;background:#fde1e3;border-radius:3.5px;"></div>
<svg style="position:absolute;left:272.94px;top:452.00px" width="3.8" height="5.0" viewBox="0 0 3.8 5.0"><path fill="#e03a4e" d="M1.35 0H2.45V2.25H3.80L1.90 5.00L0 2.25H1.35z"/></svg>
<div class="t" style="left:277.87px;top:451.55px;font-size:6.2px;line-height:6.2px;font-weight:400;color:#e03a4e;-webkit-text-stroke:0.25px #e03a4e;">14%</div>
<div class="t" style="left:227.33px;top:450.84px;font-size:7.4px;line-height:7.4px;font-weight:400;color:#333;-webkit-text-stroke:0.15px #333;">$15,635.97</div>
<div style="position:absolute;left:389.0px;top:448.8px;width:29.5px;height:10.8px;background:#fde1e3;border-radius:3.5px;"></div>
<svg style="position:absolute;left:395.94px;top:452.00px" width="3.8" height="5.0" viewBox="0 0 3.8 5.0"><path fill="#e03a4e" d="M1.35 0H2.45V2.25H3.80L1.90 5.00L0 2.25H1.35z"/></svg>
<div class="t" style="left:400.87px;top:451.55px;font-size:6.2px;line-height:6.2px;font-weight:400;color:#e03a4e;-webkit-text-stroke:0.25px #e03a4e;">14%</div>
<div class="t" style="left:374.98px;top:450.84px;font-size:7.4px;line-height:7.4px;font-weight:400;color:#333;-webkit-text-stroke:0.15px #333;">316</div>
<div style="position:absolute;left:506.0px;top:448.8px;width:29.5px;height:10.8px;background:#ececec;border-radius:3.5px;"></div>
<div class="t" style="left:517.01px;top:451.55px;font-size:6.2px;line-height:6.2px;font-weight:400;color:#555;-webkit-text-stroke:0.2px #555;">0%</div>
<div class="t" style="left:480.59px;top:450.84px;font-size:7.4px;line-height:7.4px;font-weight:400;color:#333;-webkit-text-stroke:0.15px #333;">$49.48</div>
<div class="t" style="left:598.23px;top:450.84px;font-size:7.4px;line-height:7.4px;font-weight:400;color:#333;-webkit-text-stroke:0.15px #333;">$655.40</div>
<div class="t" style="left:742.89px;top:450.84px;font-size:7.4px;line-height:7.4px;font-weight:400;color:#333;-webkit-text-stroke:0.15px #333;">23,256</div>
<div class="t" style="left:828.28px;top:450.84px;font-size:7.4px;line-height:7.4px;font-weight:400;color:#333;-webkit-text-stroke:0.15px #333;">1.83%</div>
<div class="t" style="left:951.47px;top:450.84px;font-size:7.4px;line-height:7.4px;font-weight:400;color:#333;-webkit-text-stroke:0.15px #333;">19.76%</div>
<div class="t" style="left:33.70px;top:471.04px;font-size:7.4px;line-height:7.4px;font-weight:700;color:#3d7fdc;transform:scaleX(1.0314);transform-origin:0 0;-webkit-text-stroke:0.2px #3d7fdc;">Volumizer</div>
<div class="t" style="left:33.20px;top:480.22px;font-size:7.3px;line-height:7.3px;font-weight:400;color:#444;-webkit-text-stroke:0.1px #444;">1 Products</div>
<svg style="position:absolute;left:88.8px;top:479.60px" width="6.2" height="7.2" viewBox="0 0 12 14">
<path fill="#777" d="M0.6 1.8h10.8v2.2H0.6zM3.8 0.2h4.4v1.8H3.8zM1.3 4.6h9.4l-.4 9.2H1.7z"/><rect x="4.2" y="6.9" width="3.6" height="3.6" fill="#fff"/></svg>
<svg style="position:absolute;left:105px;top:479.60px" width="7.2" height="6.6" viewBox="0 0 14 13">
<path fill="#6e6e6e" d="M0.3 12.7 L0.9 9.6 L10.4 0.3 L13.3 3.1 L3.6 12.3z"/></svg>
<svg style="position:absolute;left:120.8px;top:480.40px" width="9" height="4.6" viewBox="0 0 18 9">
<rect x="1.3" y="1.3" width="8.4" height="6.4" rx="3.2" fill="none" stroke="#ffe24f" stroke-width="3.2"/><rect x="8.3" y="1.3" width="8.4" height="6.4" rx="3.2" fill="none" stroke="#ffe24f" stroke-width="3.2"/></svg>
<div style="position:absolute;left:266.0px;top:474.5px;width:29.5px;height:10.8px;background:#d6f5e2;border-radius:3.5px;"></div>
<svg style="position:absolute;left:274.57px;top:477.70px" width="3.8" height="5.0" viewBox="0 0 3.8 5.0"><path fill="#2a9d63" d="M1.35 5.00H2.45V2.75H3.80L1.90 0L0 2.75H1.35z"/></svg>
<div class="t" style="left:279.69px;top:477.25px;font-size:6.2px;line-height:6.2px;font-weight:400;color:#2a9d63;-webkit-text-stroke:0.25px #2a9d63;">9%</div>
<div class="t" style="left:227.28px;top:476.54px;font-size:7.4px;line-height:7.4px;font-weight:400;color:#333;-webkit-text-stroke:0.15px #333;">$13,846.56</div>
<div style="position:absolute;left:389.0px;top:474.5px;width:29.5px;height:10.8px;background:#d6f5e2;border-radius:3.5px;"></div>
<svg style="position:absolute;left:395.94px;top:477.70px" width="3.8" height="5.0" viewBox="0 0 3.8 5.0"><path fill="#2a9d63" d="M1.35 5.00H2.45V2.75H3.80L1.90 0L0 2.75H1.35z"/></svg>
<div class="t" style="left:400.87px;top:477.25px;font-size:6.2px;line-height:6.2px;font-weight:400;color:#2a9d63;-webkit-text-stroke:0.25px #2a9d63;">10%</div>
<div class="t" style="left:374.98px;top:476.54px;font-size:7.4px;line-height:7.4px;font-weight:400;color:#333;-webkit-text-stroke:0.15px #333;">303</div>
<div style="position:absolute;left:506.0px;top:474.5px;width:29.5px;height:10.8px;background:#fde1e3;border-radius:3.5px;"></div>
<svg style="position:absolute;left:514.66px;top:477.70px" width="3.8" height="5.0" viewBox="0 0 3.8 5.0"><path fill="#e03a4e" d="M1.35 0H2.45V2.25H3.80L1.90 5.00L0 2.25H1.35z"/></svg>
<div class="t" style="left:519.59px;top:477.25px;font-size:6.2px;line-height:6.2px;font-weight:400;color:#e03a4e;-webkit-text-stroke:0.25px #e03a4e;">1%</div>
<div class="t" style="left:480.55px;top:476.54px;font-size:7.4px;line-height:7.4px;font-weight:400;color:#333;-webkit-text-stroke:0.15px #333;">$45.70</div>
<div class="t" style="left:598.23px;top:476.54px;font-size:7.4px;line-height:7.4px;font-weight:400;color:#333;-webkit-text-stroke:0.15px #333;">$523.60</div>
<div class="t" style="left:742.89px;top:476.54px;font-size:7.4px;line-height:7.4px;font-weight:400;color:#333;-webkit-text-stroke:0.15px #333;">19,916</div>
<div class="t" style="left:828.28px;top:476.54px;font-size:7.4px;line-height:7.4px;font-weight:400;color:#333;-webkit-text-stroke:0.15px #333;">1.81%</div>
<div class="t" style="left:951.47px;top:476.54px;font-size:7.4px;line-height:7.4px;font-weight:400;color:#333;-webkit-text-stroke:0.15px #333;">21.05%</div>
</body></html>
